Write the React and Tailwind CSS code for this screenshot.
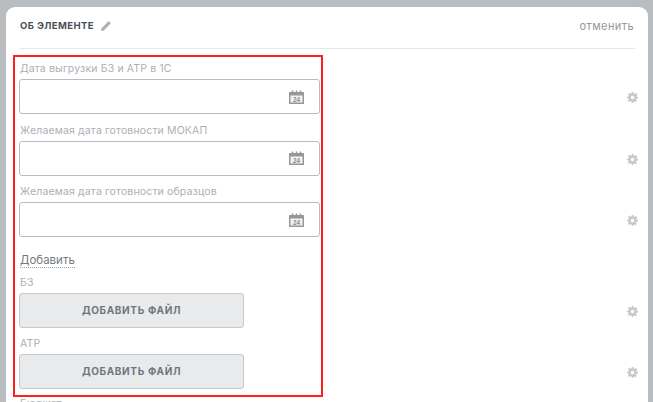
import React from "react";

function Calendar() {
  return (
    <svg width="15" height="14" viewBox="0 0 15 14" className="block">
      <rect x="0" y="2" width="15" height="12" rx="0.5" fill="#979797" />
      <rect x="1.5" y="5.500" width="12" height="7" fill="#f4f4f4" />
      <rect x="2.800" y="0.500" width="1.500" height="2.500" fill="#979797" />
      <rect x="6.750" y="0.500" width="1.500" height="2.500" fill="#979797" />
      <rect x="10.700" y="0.500" width="1.500" height="2.500" fill="#979797" />
      <text x="7.500" y="11.700" textAnchor="middle" fontSize="6.500" fontWeight="700" fill="#8a8a8a" fontFamily="Liberation Sans">24</text>
    </svg>
  );
}

function Gear() {
  return (
    <svg width="11" height="11" viewBox="0 0 24 24" className="block" fill="#c6c9cb">
      <path fillRule="evenodd" d="M10 0h4l.7 3.400 2.200.9 2.900-1.900 2.800 2.800-1.900 2.900.9 2.200L24 11v3l-3.400.7-.9 2.200 1.900 2.900-2.800 2.800-2.900-1.900-2.200.9L13.500 24h-3l-.7-3.300-2.200-.9-2.900 1.900-2.800-2.800 1.900-2.900-.9-2.200L0 13.500v-3l3.300-.7.9-2.200-1.900-2.900 2.800-2.800 2.900 1.900 2.200-.9zM12 8a4 4 0 1 0 0 8 4 4 0 0 0 0-8z" />
    </svg>
  );
}

function Pencil() {
  return (
    <svg width="10" height="10" viewBox="0 0 10 10" className="block" fill="#b0b0b0">
      <path d="M0 10l.6-2.800L7.200.6a.8.800 0 0 1 1.100 0l1.100 1.100a.8.800 0 0 1 0 1.100L2.800 9.400z" />
    </svg>
  );
}

function DateRow({ label }) {
  return (
    <div className="flex items-end justify-between">
      <div className="w-[301px]">
        <div className="text-[10.500px] leading-[14px] text-[#acb0b4] mb-[3px] pl-[1px] tracking-[0.15px]">{label}</div>
        <div className="h-[35px] border border-[#b9bcbf] rounded-[3px] flex items-center justify-end pr-[15px]">
          <Calendar />
        </div>
      </div>
      <div className="mb-[11px]"><Gear /></div>
    </div>
  );
}

function FileRow({ label }) {
  return (
    <div className="flex items-end justify-between">
      <div className="w-[225px]">
        <div className="text-[10.500px] leading-[14px] text-[#acb0b4] mb-[3px] pl-[1px] tracking-[0.15px]">{label}</div>
        <button className="w-full h-[35px] bg-[#e9eaec] border border-[#c5c9cc] rounded-[3px] text-[10px] font-bold tracking-[0.65px] text-[#71767d]">
          ДОБАВИТЬ ФАЙЛ
        </button>
      </div>
      <div className="mb-[11px]"><Gear /></div>
    </div>
  );
}

export default function App() {
  return (
    <div className="w-[653px] h-[402px] overflow-hidden bg-[#b9bdc0] pt-[7px] pl-[6px] pr-[5px] font-['Inter','Liberation_Sans',sans-serif]">
      <div className="relative h-[420px] bg-white rounded-t-[9px] pl-[13px] pr-[10px]">
        <div className="h-[42px] mr-[3px] border-b border-[#e3e8ec] flex items-center justify-between pb-[3px]">
          <div className="flex items-center gap-[7px] pl-[1px]">
            <span className="text-[9.500px] font-bold tracking-[0.4px] text-[#4a4f57]">ОБ ЭЛЕМЕНТЕ</span>
            <Pencil />
          </div>
          <span className="text-[11px] tracking-[0.4px] text-[#93979b] mr-[1px]">отменить</span>
        </div>

        <div className="pt-[13px] flex flex-col gap-[9.500px]">
          <DateRow label="Дата выгрузки БЗ и АТР в 1С" />
          <DateRow label="Желаемая дата готовности МОКАП" />
          <DateRow label="Желаемая дата готовности образцов" />
        </div>

        <div className="mt-[15px] mb-[8px] pl-[1px] text-[11.500px] leading-[16px] text-[#757a80]">
          <span className="border-b border-dotted border-[#9aa0a6] inline-block leading-[14px]">Добавить</span>
        </div>

        <div className="flex flex-col gap-[9px]">
          <FileRow label="БЗ" />
          <FileRow label="АТР" />
        </div>

        <div className="mt-[8px] pl-[1px] text-[10.500px] leading-[14px] text-[#acb0b4]">Бюджет</div>

        <div className="absolute left-[7px] top-[48px] w-[310px] h-[342px] border-2 border-[#ff1f1f] pointer-events-none" />
      </div>
    </div>
  );
}
